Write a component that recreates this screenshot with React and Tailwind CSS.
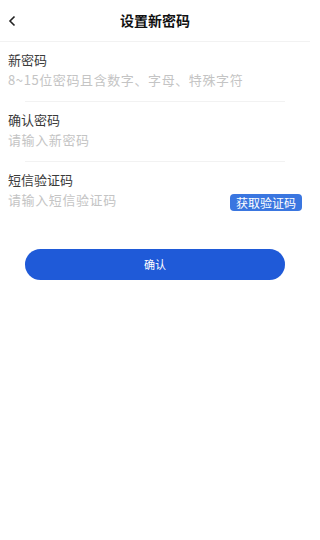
import React from 'react';

const font = { fontFamily: '"Noto Sans CJK SC", "Noto Sans", sans-serif' };

const Field = ({ label, placeholder, action, last }) => (
    <div>
        <div className="pl-[8px] pr-[8px] pt-[9px]">
            <div className="text-[13px] leading-[18px] text-[#3a3a3a]">{label}</div>
            <div className="flex items-center justify-between mt-[2px] h-[18px]">
                <span className="text-[13px] leading-[18px] text-[#c4c4c4] tracking-[0.6px]">{placeholder}</span>
                {action}
            </div>
        </div>
        {!last && <div className="mx-[25px] mt-[12px] h-px bg-[#f2f2f2]"></div>}
    </div>
);

const App = () => {
    return (
        <div className="w-[310px] h-[540px] bg-white" style={font}>
            <div className="relative h-[42px] flex items-center justify-center border-b border-[#f2f2f2]">
                <svg className="absolute left-[8px] top-[15px]" width="9" height="12" viewBox="0 0 9 12">
                    <path d="M6.5 1.5 L2 6 L6.5 10.5" fill="none" stroke="#222" strokeWidth="1.6" />
                </svg>
                <span className="text-[14px] font-bold text-[#111]">设置新密码</span>
            </div>

            <Field label="新密码" placeholder="8~15位密码且含数字、字母、特殊字符" />
            <Field label="确认密码" placeholder="请输入新密码" />
            <Field
                label="短信验证码"
                placeholder="请输入短信验证码"
                last
                action={
                    <button className="relative top-[2px] h-[17px] px-[6px] rounded-[4px] bg-[#3a76e0] text-white text-[12px] leading-[17px]">
                        获取验证码
                    </button>
                }
            />

            <div className="px-[25px] mt-[40px]">
                <button className="w-[260px] h-[31px] rounded-full bg-[#1f5ad8] text-white text-[11px]">
                    确认
                </button>
            </div>
        </div>
    );
};

export default App;
